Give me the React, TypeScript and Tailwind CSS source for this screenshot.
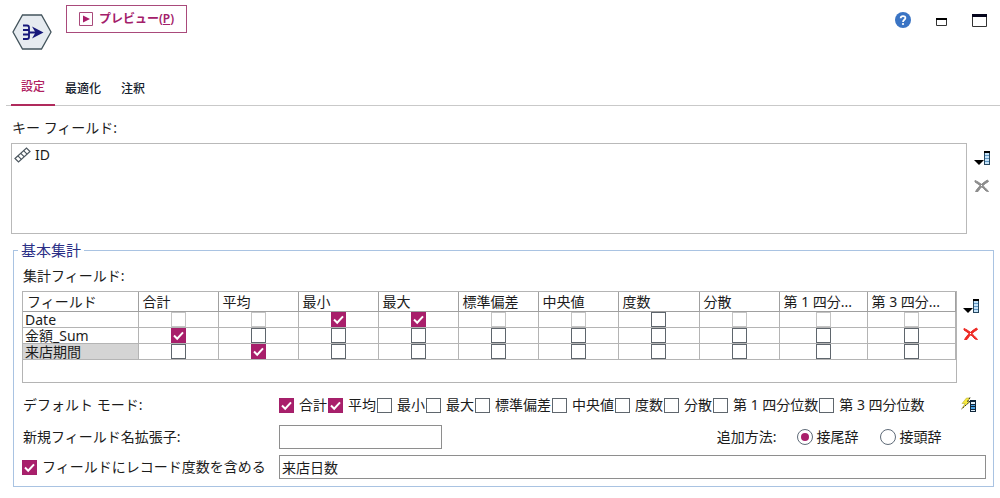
import { useState } from "react";
import type { InputHTMLAttributes } from "react";
import clsx from "clsx";

type CellState = "on" | "off" | "disabled";

const tabs = ["設定", "最適化", "注釈"];

const columns = [
  { label: "合計", width: 80 },
  { label: "平均", width: 80 },
  { label: "最小", width: 80 },
  { label: "最大", width: 80 },
  { label: "標準偏差", width: 80 },
  { label: "中央値", width: 80 },
  { label: "度数", width: 81 },
  { label: "分散", width: 80 },
  { label: "第 1 四分位数", short: "第 1 四分...", width: 88 },
  { label: "第 3 四分位数", short: "第 3 四分...", width: 88 },
];

const rows: { name: string; selected?: boolean; cells: CellState[] }[] = [
  {
    name: "Date",
    cells: ["disabled", "disabled", "on", "on", "disabled", "disabled", "off", "disabled", "disabled", "disabled"],
  },
  {
    name: "金額_Sum",
    cells: ["on", "off", "off", "off", "off", "off", "off", "off", "off", "off"],
  },
  {
    name: "来店期間",
    selected: true,
    cells: ["off", "on", "off", "off", "off", "off", "off", "off", "off", "off"],
  },
];

function Checkbox(props: InputHTMLAttributes<HTMLInputElement>) {
  return (
    <span className="inline-grid h-[15px] w-[15px] shrink-0 align-top">
      <input
        type="checkbox"
        className="peer col-start-1 row-start-1 h-[15px] w-[15px] appearance-none border border-[#5f666d] bg-white checked:border-[#a3206a] checked:bg-[#a91f6b] disabled:border-[#c4c4c4]"
        {...props}
      />
      <svg
        viewBox="0 0 15 15"
        className="pointer-events-none invisible col-start-1 row-start-1 h-[15px] w-[15px] peer-checked:visible"
      >
        <path d="M3 7.5 6.2 10.7 12 4.4" fill="none" stroke="#fff" strokeWidth="2" />
      </svg>
    </span>
  );
}

function Radio({ label, ...props }: InputHTMLAttributes<HTMLInputElement> & { label: string }) {
  return (
    <label className="flex items-center gap-1">
      <span className="inline-grid h-4 w-4">
        <input
          type="radio"
          className="peer col-start-1 row-start-1 h-4 w-4 appearance-none rounded-full border border-[#5f6b78] bg-white"
          {...props}
        />
        <span className="pointer-events-none invisible col-start-1 row-start-1 h-2 w-2 place-self-center rounded-full bg-[#a91f6b] peer-checked:visible" />
      </span>
      {label}
    </label>
  );
}

function NodeIcon() {
  return (
    <svg viewBox="0 0 40 36" className="h-9 w-10 shrink-0">
      <path d="M10.5 1h19L39 18l-9.500 17h-19L1 18z" fill="#e6ebf0" stroke="#43545c" strokeWidth="1.300" />
      <path
        d="M11 11.500H15q2 0 2 2V23q0 2-2 2h-4M11 16h6M11 20.500h6M17 18.500h7"
        fill="none"
        stroke="#17187a"
        strokeWidth="1.800"
      />
      <path d="M20 12.500 31.500 18.500 20 24.500 23.500 18.500z" fill="#17187a" />
    </svg>
  );
}

function PickerIcon() {
  return (
    <svg viewBox="0 0 17 15" className="h-[15px] w-[17px]">
      <path d="M0 9h10L5 14z" fill="#000" />
      <path d="M10 0h6v14h-6z" fill="#26475f" />
      <path d="M10 0h6v2h-6z" fill="#000" />
      <path d="M11 2h4v11h-4z" fill="#c4e2f8" />
      <path d="M11 4h4v1h-4zM11 7h4v1h-4zM11 10h4v1h-4z" fill="#5f97c4" />
    </svg>
  );
}

function DeleteIcon({ color }: { color: string }) {
  return (
    <svg viewBox="0 0 16 14" className="h-3.5 w-4">
      <path
        d="M1 1.500C5 3 10 7 14.500 12.500L12 12C9 8.500 5 5.500 1 3zM13.500 1C9 3.500 4 8 1.500 12.500L4 12.500C6 9 10 5 14.500 2.500z"
        fill={color}
        stroke={color}
      />
    </svg>
  );
}

function RestoreDefaultsIcon() {
  return (
    <svg viewBox="0 0 17 16" className="h-4 w-[17px]">
      <path d="M5.500 1H9L6.500 4.500H9L1 11.500 4 6.500H1z" fill="#f7ea3c" stroke="#b9ae3a" strokeWidth=".6" />
      <path d="M9 .5 6.500 4.500H9L.5 12" fill="none" stroke="#33332a" strokeDasharray="2 1" />
      <path d="M9 3h6v12H9z" fill="#10263a" />
      <path d="M10 5h4v2h-4zM10 13h4v1h-4z" fill="#e2f1fb" />
      <path d="M10 8h4v1h-4zM10 10h4v2h-4z" fill="#4aa3e6" />
    </svg>
  );
}

function Toolbar() {
  return (
    <header className="flex items-start pr-[13px] pl-3">
      <div className="pt-3.5">
        <NodeIcon />
      </div>
      <button
        type="button"
        className="mt-[5px] ml-3.5 flex h-7 w-[121px] items-center justify-center gap-1.5 border border-[#a94a7b] text-[12px] font-semibold text-[#a3206a]"
      >
        <svg viewBox="0 0 14 14" className="h-3.5 w-3.5">
          <path d="M.5.5h13v13H.5z" fill="none" stroke="#a94a7b" />
          <path d="M4 3.500 11 7 4 10.500z" fill="#a91f6b" />
        </svg>
        <span>
          プレビュー(<u className="underline-offset-1">P</u>)
        </span>
      </button>
      <div className="ml-auto flex items-center pt-3">
        <button type="button" aria-label="ヘルプ" className="mr-[25px]">
          <svg viewBox="0 0 16 16" className="h-4 w-4">
            <circle cx="8" cy="8" r="8" fill="#3a74c4" />
            <path d="M5.700 6.300C5.700 3.400 10.400 3.400 10.400 6.100 10.400 7.700 8 7.900 8 9.900" fill="none" stroke="#fff" strokeWidth="1.800" />
            <circle cx="8" cy="12" r="1.100" fill="#fff" />
          </svg>
        </button>
        <button type="button" aria-label="最小化" className="mr-[25px] pt-1">
          <svg viewBox="0 0 11 8" className="h-2 w-[11px]">
            <path d="M.5.5h10v7H.5z" fill="#fff" stroke="#333" />
            <path d="M0 0h11v2H0z" fill="#000" />
          </svg>
        </button>
        <button type="button" aria-label="最大化">
          <svg viewBox="0 0 15 13" className="h-[13px] w-[15px]">
            <path d="M.5.5h14v12H.5z" fill="#fff" stroke="#333" />
            <path d="M0 0h15v3H0z" fill="#05051c" />
          </svg>
        </button>
      </div>
    </header>
  );
}

function AggregateTable() {
  return (
    <div className="h-[92px] min-w-0 flex-1 border border-[#b4b4b4]">
      <table className="w-full table-fixed border-collapse">
        <colgroup>
          <col width={115} />
          {columns.map((col) => (
            <col key={col.label} width={col.width} />
          ))}
        </colgroup>
        <thead>
          <tr className="leading-[19px]">
            <th className="border-r border-b border-[#a0a0a0] p-0 pl-1 text-left font-normal">フィールド</th>
            {columns.map((col) => (
              <th
                key={col.label}
                title={col.label}
                className="overflow-hidden border-r border-b border-[#a0a0a0] p-0 pl-1 text-left font-normal whitespace-nowrap"
              >
                {col.short ?? col.label}
              </th>
            ))}
          </tr>
        </thead>
        <tbody>
          {rows.map((row) => (
            <tr key={row.name} className="h-4">
              <th
                scope="row"
                className={clsx(
                  "border-r border-b border-[#b4b4b4] p-0 pl-0.5 text-left leading-[15px] font-normal",
                  row.selected && "bg-[#d4d4d4]",
                )}
              >
                {row.name}
              </th>
              {row.cells.map((cell, i) => (
                <td key={columns[i].label} className="border-r border-b border-[#b4b4b4] p-0 text-center leading-[15px]">
                  <Checkbox
                    aria-label={`${row.name} ${columns[i].label}`}
                    defaultChecked={cell === "on"}
                    disabled={cell === "disabled"}
                  />
                </td>
              ))}
            </tr>
          ))}
        </tbody>
      </table>
    </div>
  );
}

export default function App() {
  const [activeTab, setActiveTab] = useState(tabs[0]);

  return (
    <main className="bg-white pb-2.5 font-['Noto_Sans','Noto_Sans_CJK_JP',sans-serif] text-[14px] leading-5 text-[#1c1c1c]">
      <Toolbar />

      <div role="tablist" className="mt-6 ml-1.5 flex border-b border-[#c9c9c9] pl-[5px]">
        {tabs.map((tab) => (
          <button
            key={tab}
            type="button"
            role="tab"
            aria-selected={tab === activeTab}
            onClick={() => setActiveTab(tab)}
            className={clsx(
              "-mb-px h-8 border-b-2 px-2.5 text-[12px] font-medium",
              tab === activeTab ? "border-[#b02a5c] pb-1 text-[#b0205f]" : "border-transparent text-[#14202c]",
            )}
          >
            {tab}
          </button>
        ))}
      </div>

      <section className="pt-3 pl-[11px]">
        <h2 id="key-fields" className="pl-px">
          キー フィールド:
        </h2>
        <div className="mt-[5px] flex gap-[7px] pr-[9px]">
          <ul aria-labelledby="key-fields" className="h-[91px] flex-1 border border-[#b9b9b9] pt-px pl-0.5">
            <li className="flex items-center gap-1">
              <svg viewBox="0 0 17 16" className="h-4 w-[17px]">
                <g fill="#fff" stroke="#4d5860" strokeWidth="1.200">
                  <path d="M1 11.500 12.500 1 16 4.500 4.500 15z" />
                  <path d="M3.900 8.900 7.400 12.400M6.800 6.300 10.300 9.800M9.600 3.700 13.100 7.200" />
                </g>
              </svg>
              ID
            </li>
          </ul>
          <div className="flex w-[17px] flex-col gap-[13px] pt-2">
            <button type="button" aria-label="フィールドを選択">
              <PickerIcon />
            </button>
            <button type="button" aria-label="フィールドを削除" disabled>
              <DeleteIcon color="#8c8c8c" />
            </button>
          </div>
        </div>
      </section>

      <fieldset className="mt-1.5 mr-2 ml-[13px] border border-[#a9c3e2] pb-[7px] pl-2">
        <legend className="-ml-1 px-[3px] text-[15px] text-[#2b2f86]">基本集計</legend>
        <h3 className="mt-1.5 pl-px">集計フィールド:</h3>
        <div className="mt-[5px] flex gap-1.5 pr-[13px]">
          <AggregateTable />
          <div className="flex w-[17px] flex-col gap-[13px] pt-2">
            <button type="button" aria-label="集計フィールドを選択">
              <PickerIcon />
            </button>
            <button type="button" aria-label="集計フィールドを削除">
              <DeleteIcon color="#ee2a24" />
            </button>
          </div>
        </div>

        <div className="mt-3 flex items-center pr-[15px]">
          <span className="w-[257px] shrink-0 pl-px">デフォルト モード:</span>
          <div role="group" aria-label="デフォルト モード" className="flex flex-1 gap-px">
            {columns.map((col, i) => (
              <label key={col.label} className="flex items-center gap-[5px] whitespace-nowrap">
                <Checkbox defaultChecked={i < 2} />
                {col.label}
              </label>
            ))}
          </div>
          <button type="button" aria-label="デフォルトに戻す">
            <RestoreDefaultsIcon />
          </button>
        </div>

        <div className="mt-2.5 flex items-center pr-[51px]">
          <label htmlFor="extension" className="w-[257px] shrink-0 pl-px">
            新規フィールド名拡張子:
          </label>
          <input id="extension" className="h-6 w-[163px] border border-[#8e8e8e] px-0.5" />
          <div role="radiogroup" aria-label="追加方法" className="ml-auto flex items-center">
            <span className="mr-5">追加方法:</span>
            <Radio label="接尾辞" name="position" defaultChecked />
            <span className="w-[21px]" />
            <Radio label="接頭辞" name="position" />
          </div>
        </div>

        <div className="mt-1.5 flex items-center pr-[7px]">
          <label className="flex w-[257px] shrink-0 items-center gap-[5px]">
            <Checkbox defaultChecked />
            フィールドにレコード度数を含める
          </label>
          <input
            aria-label="レコード度数フィールド名"
            defaultValue="来店日数"
            className="h-6 min-w-0 flex-1 border border-[#8e8e8e] px-0.5"
          />
        </div>
      </fieldset>
    </main>
  );
}
